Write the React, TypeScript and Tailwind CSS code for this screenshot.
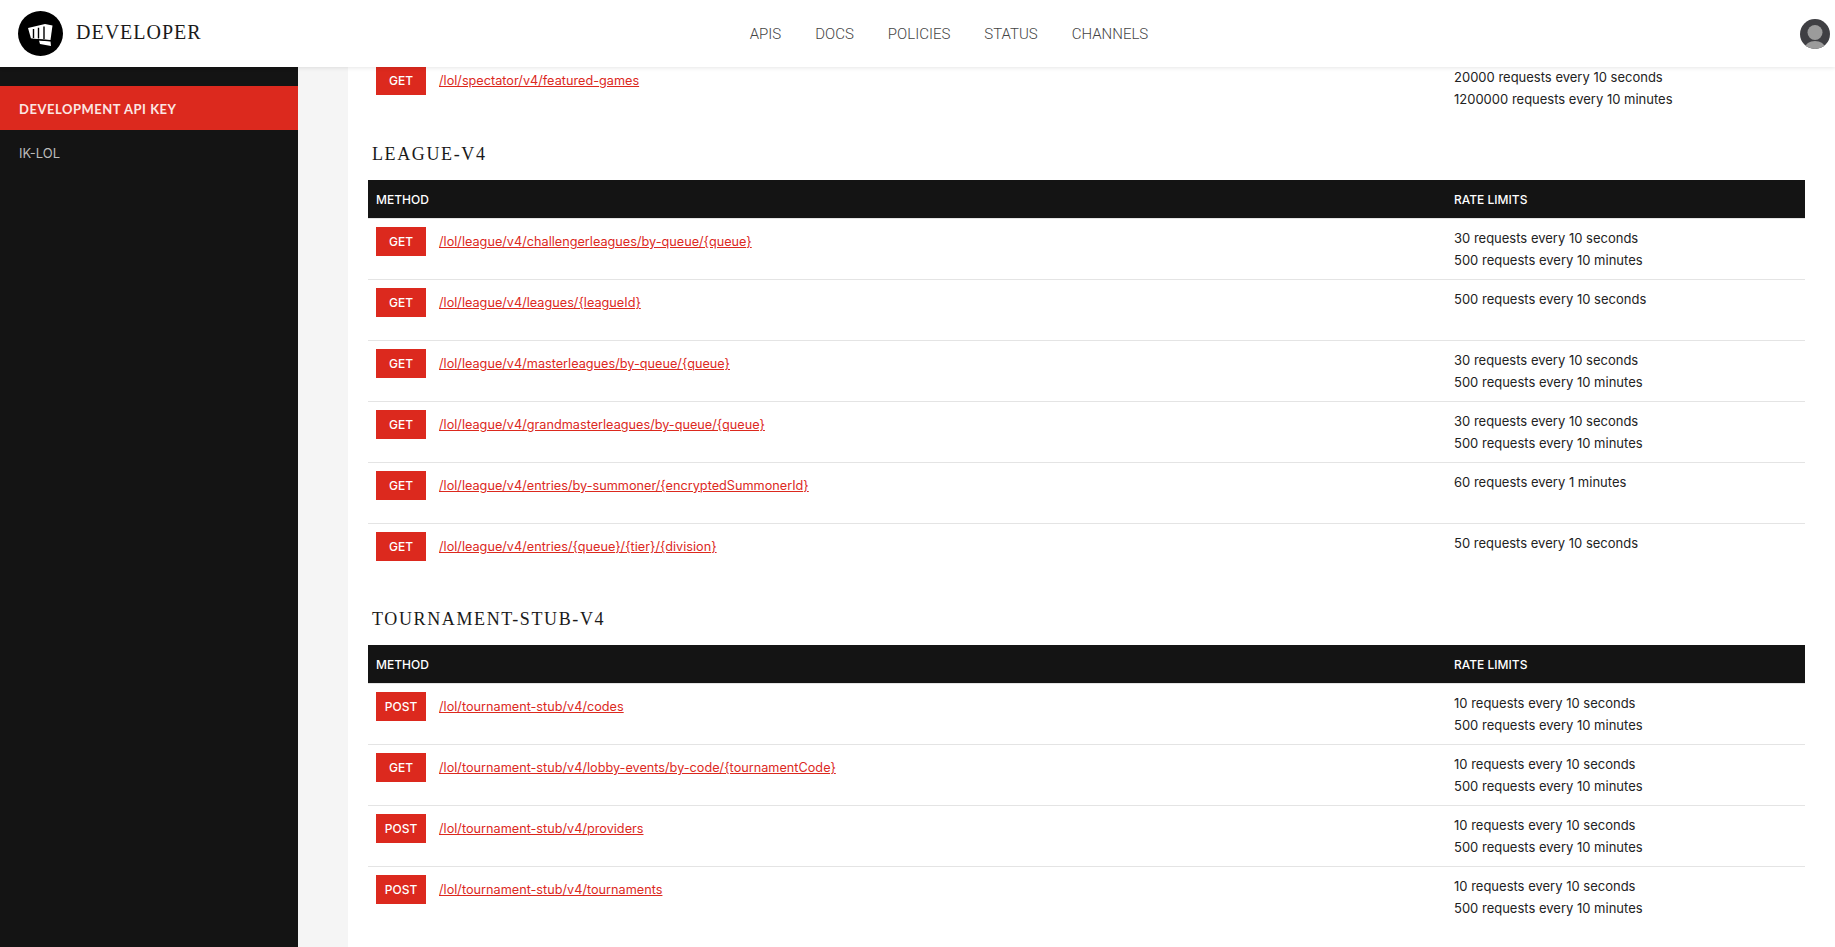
const leagueRows = [
  { method: 'GET', path: '/lol/league/v4/challengerleagues/by-queue/{queue}', limits: ['30 requests every 10 seconds', '500 requests every 10 minutes'] },
  { method: 'GET', path: '/lol/league/v4/leagues/{leagueId}', limits: ['500 requests every 10 seconds'] },
  { method: 'GET', path: '/lol/league/v4/masterleagues/by-queue/{queue}', limits: ['30 requests every 10 seconds', '500 requests every 10 minutes'] },
  { method: 'GET', path: '/lol/league/v4/grandmasterleagues/by-queue/{queue}', limits: ['30 requests every 10 seconds', '500 requests every 10 minutes'] },
  { method: 'GET', path: '/lol/league/v4/entries/by-summoner/{encryptedSummonerId}', limits: ['60 requests every 1 minutes'] },
  { method: 'GET', path: '/lol/league/v4/entries/{queue}/{tier}/{division}', limits: ['50 requests every 10 seconds'] },
]

const tournamentLimits = ['10 requests every 10 seconds', '500 requests every 10 minutes']
const tournamentRows = [
  { method: 'POST', path: '/lol/tournament-stub/v4/codes', limits: tournamentLimits },
  { method: 'GET', path: '/lol/tournament-stub/v4/lobby-events/by-code/{tournamentCode}', limits: tournamentLimits },
  { method: 'POST', path: '/lol/tournament-stub/v4/providers', limits: tournamentLimits },
  { method: 'POST', path: '/lol/tournament-stub/v4/tournaments', limits: tournamentLimits },
]

type Row = { method: string; path: string; limits: string[] }

function ApiRow({ row }: { row: Row }) {
  return (
    <div className="flex h-[61px] border-t border-[#e4e4e4] pt-2">
      <div className="flex w-[1086px] items-start pl-2">
        <MethodBadge method={row.method} />
        <a className="ml-[13px] mt-[6px] text-[12.7px] leading-[18px] text-[#dc291e] underline" href="#">
          {row.path}
        </a>
      </div>
      <Limits limits={row.limits} />
    </div>
  )
}

function MethodBadge({ method }: { method: string }) {
  return (
    <div className="flex h-[29px] w-[50px] items-center justify-center bg-[#dc291e] text-xs font-medium text-white">
      {method}
    </div>
  )
}

function Limits({ limits }: { limits: string[] }) {
  return (
    <div className="text-[13px] leading-[22px] text-[#222]">
      {limits.map((l) => (
        <div key={l}>{l}</div>
      ))}
    </div>
  )
}

function Section({ title, rows, className }: { title: string; rows: Row[]; className: string }) {
  return (
    <section className={className}>
      <h2 className="pl-1 font-['Liberation_Serif',serif] text-lg leading-6 tracking-[0.09em] text-[#1a1a1a]">{title}</h2>
      <div className="mt-[14px] flex h-[38px] items-center bg-[#141414] pt-px text-xs font-medium text-white">
        <div className="w-[1086px] pl-2">METHOD</div>
        <div>RATE LIMITS</div>
      </div>
      {rows.map((row) => (
        <ApiRow key={row.path} row={row} />
      ))}
    </section>
  )
}

export default function App() {
  return (
    <div className="flex h-[947px] flex-col overflow-hidden bg-white font-['Inter',sans-serif]">
      <header className="relative z-10 flex h-[67px] shrink-0 items-center justify-between bg-white pl-[18px] pr-[5px] shadow-[0_1px_4px_rgba(0,0,0,0.1)]">
        <div className="flex w-[350px] items-center">
          <svg viewBox="0 0 45 45" className="h-[45px] w-[45px]">
            <circle cx="22.5" cy="22.5" r="22.5" fill="#000" />
            <path d="M10 17 L27 13 L34.5 14.5 L32.5 29 L13 27.5 Z" fill="#fff" />
            <path d="M21 29.5 L32.5 30.5 L33 35 L22 33 Z" fill="#fff" />
            <path d="M15.5 18 V27 M20.5 16.8 V27.5 M26 15.5 V28" stroke="#000" strokeWidth="1.4" />
            <path d="M13 28.2 L32.5 29.7" stroke="#000" strokeWidth="1" />
          </svg>
          <span className="mb-[3px] ml-[13px] font-['Liberation_Serif',serif] text-[20px] tracking-[0.05em] text-[#1a1a1a]">DEVELOPER</span>
        </div>
        <nav className="flex gap-[34px] pt-px font-['Roboto',sans-serif] text-[15px] font-light text-[#444]">
          <span>APIS</span>
          <span>DOCS</span>
          <span>POLICIES</span>
          <span>STATUS</span>
          <span>CHANNELS</span>
        </nav>
        <div className="flex w-[300px] justify-end">
          <svg viewBox="0 0 30 30" className="h-[30px] w-[30px]">
            <defs>
              <clipPath id="avatar">
                <circle cx="15" cy="15" r="15" />
              </clipPath>
            </defs>
            <g clipPath="url(#avatar)">
              <rect width="30" height="30" fill="#3f3f43" />
              <circle cx="15" cy="13.5" r="7.5" fill="#9b9b9b" />
              <ellipse cx="15" cy="29" rx="10" ry="7" fill="#9b9b9b" />
            </g>
          </svg>
        </div>
      </header>
      <div className="flex min-h-0 flex-1">
        <aside className="w-[298px] shrink-0 bg-[#141414] pt-[19px]">
          <div className="flex h-11 items-center bg-[#dc291e] pl-[19px] pt-[3px] font-['Lato',sans-serif] text-[13px] font-bold tracking-[0.04em] text-[#fbe6e3]">
            DEVELOPMENT API KEY
          </div>
          <div className="flex h-[44px] items-center pl-[19px] pt-[3px] text-[13px] text-[#bbb]">IK-LOL</div>
        </aside>
        <div className="w-[50px] shrink-0 bg-[#f5f5f5]" />
        <main className="min-w-0 flex-1 pl-5 pr-[30px]">
          <div className="-mt-px flex h-[66px]">
            <div className="flex w-[1086px] items-start pl-2">
              <MethodBadge method="GET" />
              <a className="ml-[13px] mt-[6px] text-[12.7px] leading-[18px] text-[#dc291e] underline" href="#">
                /lol/spectator/v4/featured-games
              </a>
            </div>
            <Limits limits={['20000 requests every 10 seconds', '1200000 requests every 10 minutes']} />
          </div>
          <Section title="LEAGUE-V4" rows={leagueRows} className="mt-[10px]" />
          <Section title="TOURNAMENT-STUB-V4" rows={tournamentRows} className="mt-[23px]" />
        </main>
      </div>
    </div>
  )
}
